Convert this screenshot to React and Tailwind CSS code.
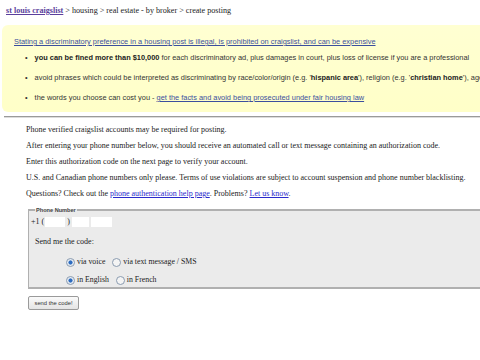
export default function App() {
  const serif = { fontFamily: '"Liberation Serif", "Times New Roman", serif' };

  const Radio = ({ checked }) => (
    <span
      className={`inline-block w-[9px] h-[9px] rounded-full border border-[#8a9bb0] ${
        checked ? 'bg-[radial-gradient(circle,#2d6cc0_0%,#2d6cc0_35%,#dde6f0_48%,#fff_100%)]' : 'bg-[#f4f4f4]'
      }`}
    />
  );

  return (
    <div className="w-[480px] h-[360px] bg-white overflow-hidden text-[#222]">
      {/* Breadcrumb */}
      <div className="pt-[6px] pl-[6px] text-[8.15px] leading-[10px] whitespace-nowrap" style={serif}>
        <a className="text-[#5b3f9c] underline font-bold">st louis craigslist</a>
        <span> &gt; housing &gt; real estate - by broker &gt; create posting</span>
      </div>

      {/* Warning box */}
      <div className="mt-[9px] ml-[2px] w-[520px] h-[87px] rounded-l-[6px] bg-[linear-gradient(#ffffd2,#ffffc8)] pl-[12px] pt-[13px] font-['Liberation_Sans',Arial,sans-serif] text-[7.4px] leading-[8px] whitespace-nowrap text-[#333]">
        <a className="text-[#3b4f9e] underline">
          Stating a discriminatory preference in a housing post is illegal, is prohibited on craigslist, and can be expensive
        </a>
        <div className="flex flex-col gap-[12px] mt-[8px] pl-[11px]">
          <div className="flex gap-[7px]">
            <span>•</span>
            <span>
              <b className="text-[#222]">you can be fined more than $10,000</b> for each discriminatory ad, plus damages in court, plus loss of license if you are a professional
            </span>
          </div>
          <div className="flex gap-[7px]">
            <span>•</span>
            <span>
              avoid phrases which could be interpreted as discriminating by race/color/origin (e.g. '<b className="text-[#222]">hispanic area</b>'), religion (e.g. '<b className="text-[#222]">christian home</b>'), age
            </span>
          </div>
          <div className="flex gap-[7px]">
            <span>•</span>
            <span>
              the words you choose can cost you - <a className="text-[#3b4f9e] underline">get the facts and avoid being prosecuted under fair housing law</a>
            </span>
          </div>
        </div>
      </div>

      {/* Rule */}
      <div className="mt-[4px] ml-[4px] h-[2px] bg-[#9a9a9a] border-b border-[#dcdcdc]" />

      {/* Body text */}
      <div className="pl-[26px] pt-[7px] flex flex-col gap-[6px] text-[8px] leading-[10px] whitespace-nowrap" style={serif}>
        <p>Phone verified craigslist accounts may be required for posting.</p>
        <p>After entering your phone number below, you should receive an automated call or text message containing an authorization code.</p>
        <p>Enter this authorization code on the next page to verify your account.</p>
        <p>U.S. and Canadian phone numbers only please. Terms of use violations are subject to account suspension and phone number blacklisting.</p>
        <p>
          Questions? Check out the <a className="text-[#2a2acc] underline">phone authentication help page</a>. Problems? <a className="text-[#2a2acc] underline">Let us know</a>.
        </p>
      </div>

      {/* Fieldset */}
      <fieldset className="mt-[8px] ml-[28px] w-[460px] h-[82px] border-t-[2px] border-l border-b-[2px] border-[#b0b0b0] bg-[#ebebeb] px-[2px] pb-[4px]" style={serif}>
        <legend className="ml-[4px] px-[1px] text-[5.6px] leading-[6px] font-bold text-[#444] font-['Liberation_Sans',Arial,sans-serif]">
          Phone Number
        </legend>
        <div className="flex items-center text-[8px] leading-[10px] mt-[4px]">
          <span>+1 (</span>
          <span className="ml-[1px] w-[20px] h-[10px] bg-white" />
          <span className="ml-[2px]">)</span>
          <span className="ml-[2px] w-[17px] h-[10px] bg-white" />
          <span className="ml-[2px] w-[21px] h-[10px] bg-white" />
        </div>
        <div className="mt-[10px] pl-[4px] text-[8px] leading-[10px]">Send me the code:</div>
        <div className="mt-[10px] pl-[35px] flex flex-col gap-[8px] text-[7.8px] leading-[10px]">
          <div className="flex items-center">
            <Radio checked />
            <span className="ml-[2px]">via voice</span>
            <span className="ml-[7px] flex"><Radio /></span>
            <span className="ml-[2px]">via text message / SMS</span>
          </div>
          <div className="flex items-center">
            <Radio checked />
            <span className="ml-[2px]">in English</span>
            <span className="ml-[7px] flex"><Radio /></span>
            <span className="ml-[2px]">in French</span>
          </div>
        </div>
      </fieldset>

      {/* Button */}
      <div className="pl-[28px] mt-[7px] flex">
        <button className="w-[51px] h-[14px] border border-[#9a9a9a] rounded-[2px] bg-[linear-gradient(#fafafa,#e4e4e4)] text-[5.8px] leading-[12px] text-[#333] font-['Liberation_Sans',Arial,sans-serif]">
          send the code!
        </button>
      </div>
    </div>
  );
}
